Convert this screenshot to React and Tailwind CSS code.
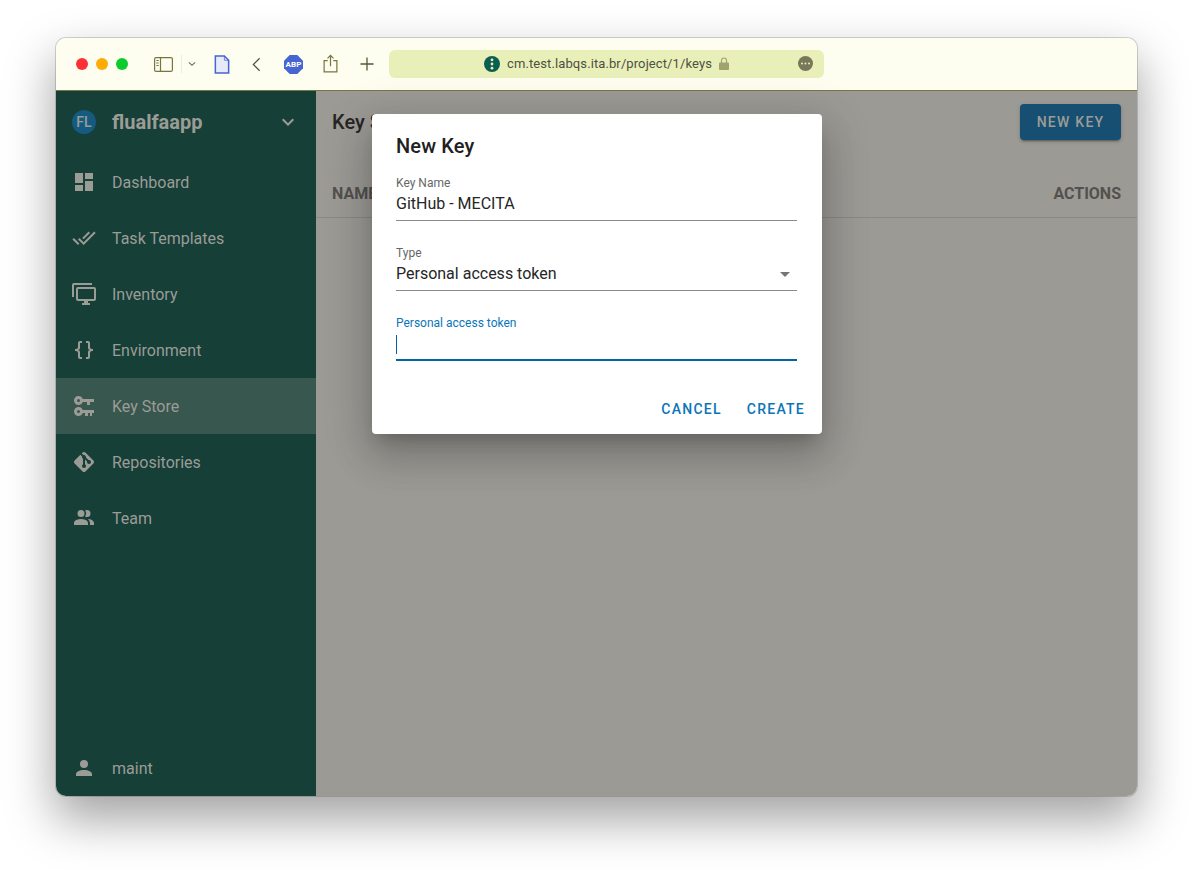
import React from "react";

const paths = {
  dashboard: "M13,3V9H21V3M13,21H21V11H13M3,21H11V15H3M3,13H11V3H3V13Z",
  tasks: "M0.41,13.41L6,19L7.41,17.58L1.83,12M22.24,5.58L11.66,16.17L7.5,12L6.07,13.41L11.66,19L23.66,7M18,7L16.59,5.58L10.24,11.93L11.66,13.34L18,7Z",
  inventory: "M22,17V7H6V17H22M22,5A2,2 0 0,1 24,7V17C24,18.11 23.1,19 22,19H16V21H18V23H10V21H12V19H6C4.89,19 4,18.11 4,17V7A2,2 0 0,1 6,5H22M2,3V15H0V3A2,2 0 0,1 2,1H20V3H2Z",
  braces: "M8,3A2,2 0 0,0 6,5V9A2,2 0 0,1 4,11H3V13H4A2,2 0 0,1 6,15V19A2,2 0 0,0 8,21H10V19H8V14A2,2 0 0,0 6,12A2,2 0 0,0 8,10V5H10V3M16,3A2,2 0 0,1 18,5V9A2,2 0 0,0 20,11H21V13H20A2,2 0 0,0 18,15V19A2,2 0 0,1 16,21H14V19H16V14A2,2 0 0,1 18,12A2,2 0 0,1 16,10V5H14V3H16Z",
  keys: "M6.5,2C8.46,2 10.13,3.25 10.74,5H22V8H18V11H15V8H10.74C10.13,9.75 8.46,11 6.5,11C4,11 2,9 2,6.5C2,4 4,2 6.5,2M6.5,5A1.5,1.5 0 0,0 5,6.5A1.5,1.5 0 0,0 6.5,8A1.5,1.5 0 0,0 8,6.5A1.5,1.5 0 0,0 6.5,5M6.5,13C8.46,13 10.13,14.25 10.74,16H22V19H20V22H18V19H16V22H13V19H10.74C10.13,20.75 8.46,22 6.5,22C4,22 2,20 2,17.5C2,15 4,13 6.5,13M6.5,16A1.5,1.5 0 0,0 5,17.5A1.5,1.5 0 0,0 6.5,19A1.5,1.5 0 0,0 8,17.5A1.5,1.5 0 0,0 6.5,16Z",
  git: "M2.6,10.59L8.38,4.8L10.07,6.5C9.83,7.35 10.22,8.28 11,8.73V14.27C10.4,14.61 10,15.26 10,16A2,2 0 0,0 12,18A2,2 0 0,0 14,16C14,15.26 13.6,14.61 13,14.27V9.41L15.07,11.5C15,11.65 15,11.82 15,12A2,2 0 0,0 17,14A2,2 0 0,0 19,12A2,2 0 0,0 17,10C16.82,10 16.65,10 16.5,10.07L13.93,7.5C14.19,6.57 13.71,5.55 12.78,5.16C12.35,5 11.9,4.96 11.5,5.07L9.8,3.38L10.59,2.6C11.37,1.81 12.63,1.81 13.41,2.6L21.4,10.59C22.19,11.37 22.19,12.63 21.4,13.41L13.41,21.4C12.63,22.19 11.37,22.19 10.59,21.4L2.6,13.41C1.81,12.63 1.81,11.37 2.6,10.59Z",
  team: "M16 17V19H2V17S2 13 9 13 16 17 16 17M12.5 7.5A3.5 3.5 0 1 0 9 11A3.5 3.5 0 0 0 12.5 7.5M15.94 13A5.32 5.32 0 0 1 18 17V19H22V17S22 13.37 15.94 13M15 4A3.39 3.39 0 0 0 13.07 4.59A5 5 0 0 1 13.07 10.41A3.39 3.39 0 0 0 15 11A3.5 3.5 0 0 0 15 4Z",
  account: "M12,4A4,4 0 0,1 16,8A4,4 0 0,1 12,12A4,4 0 0,1 8,8A4,4 0 0,1 12,4M12,14C16.42,14 20,15.79 20,18V20H4V18C4,15.79 7.58,14 12,14Z",
  chevron: "M7.41,8.58L12,13.17L16.59,8.58L18,10L12,16L6,10L7.41,8.58Z",
};

const navItems = [
  { label: "Dashboard", icon: "dashboard" },
  { label: "Task Templates", icon: "tasks" },
  { label: "Inventory", icon: "inventory" },
  { label: "Environment", icon: "braces" },
  { label: "Key Store", icon: "keys", active: true },
  { label: "Repositories", icon: "git" },
  { label: "Team", icon: "team" },
];

function Mdi({ name, className }) {
  return (
    <svg viewBox="0 0 24 24" className={className} fill="currentColor">
      <path d={paths[name]} />
    </svg>
  );
}

function NavRow({ label, icon, active }) {
  return (
    <div className={`flex h-14 items-center pl-4 ${active ? "bg-[#38574e]" : ""}`}>
      <Mdi name={icon} className="h-6 w-6 shrink-0 text-[#9c9c97]" />
      <span className="ml-4 mt-[2px] text-base text-[#9c9c97]">{label}</span>
    </div>
  );
}

function Toolbar() {
  return (
    <div className="flex h-[53px] shrink-0 items-center border-b border-[#77763f] bg-[#fdfeef]">
      <div className="ml-5 flex gap-2">
        <div className="h-3 w-3 rounded-full bg-[#fb3138]" />
        <div className="h-3 w-3 rounded-full bg-[#fdab07]" />
        <div className="h-3 w-3 rounded-full bg-[#0ccb2f]" />
      </div>
      {/* sidebar toggle */}
      <svg viewBox="0 0 19 15" className="ml-[26px] h-[15px] w-[19px]" fill="none" stroke="#77763f" strokeWidth="1.2">
        <rect x="0.6" y="0.6" width="17.8" height="13.8" rx="1.5" />
        <path d="M6.5 0.6V14.4" />
        <path d="M2.3 3.5H4.7M2.3 6H4.7M2.3 8.5H4.7" />
      </svg>
      <div className="ml-2 h-[18px] w-px bg-[#eceedd]" />
      <svg viewBox="0 0 10 6" className="ml-[6px] h-[6px] w-2" fill="none" stroke="#77763f" strokeWidth="1.3">
        <path d="M1 1L5 4.5L9 1" />
      </svg>
      {/* page icon */}
      <svg viewBox="0 0 16 20" className="ml-[18px] h-[19px] w-4" fill="#e6eafa" stroke="#4664d2" strokeWidth="1.6">
        <path d="M1 1H10.5L15 5.5V19H1Z" />
        <path d="M10.5 1V5.5H15" fill="none" strokeWidth="0.8" />
      </svg>
      <svg viewBox="0 0 10 16" className="ml-[22px] h-[15px] w-[9px]" fill="none" stroke="#55553a" strokeWidth="1.4">
        <path d="M8.5 1L1.5 8L8.5 15" />
      </svg>
      {/* adblock badge */}
      <svg viewBox="0 0 20 20" className="ml-[23px] h-[19px] w-[19px]">
        <polygon points="6,0 14,0 20,6 20,14 14,20 6,20 0,14 0,6" fill="#4664d2" />
        <text x="10" y="13" textAnchor="middle" fontSize="8.5" fontWeight="700" fill="#fff" fontFamily="Roboto, sans-serif">ABP</text>
      </svg>
      <svg viewBox="0 0 16 20" className="ml-5 mt-[-1px] h-[19px] w-[15px]" fill="none" stroke="#77763f" strokeWidth="1.3">
        <path d="M5 7H1.2V19H14.8V7H11" />
        <path d="M8 13V1.5M4.8 4.5L8 1.3L11.2 4.5" />
      </svg>
      <svg viewBox="0 0 14 14" className="ml-[22px] h-[14px] w-[14px]" fill="none" stroke="#55553a" strokeWidth="1.3">
        <path d="M7 0.5V13.5M0.5 7H13.5" />
      </svg>
      {/* address bar */}
      <div className="relative ml-[15px] flex h-7 w-[435px] items-center justify-center rounded-md bg-[#e9efb9]">
        <svg viewBox="0 0 16 16" className="h-4 w-4">
          <circle cx="8" cy="8" r="8" fill="#0a5f50" />
          <circle cx="8" cy="3.8" r="1.4" fill="#e9efb9" />
          <circle cx="8" cy="8" r="1.4" fill="#e9efb9" />
          <circle cx="8" cy="12.2" r="1.4" fill="#e9efb9" />
        </svg>
        <span className="ml-[7px] text-[13px] tracking-[0.1px] text-[#4e5140]">cm.test.labqs.ita.br/project/1/keys</span>
        <svg viewBox="0 0 10 13" className="ml-[7px] mt-[-1px] h-[13px] w-[10px]">
          <path d="M2.5 6V3.5a2.5 2.5 0 0 1 5 0V6" fill="none" stroke="#a0a26f" strokeWidth="1.2" />
          <rect y="5.5" width="10" height="7.5" rx="1" fill="#a0a26f" />
        </svg>
        <svg viewBox="0 0 15 15" className="absolute right-[11px] top-[6px] h-[15px] w-[15px]">
          <circle cx="7.5" cy="7.5" r="7.5" fill="#77775a" />
          <circle cx="4" cy="7.5" r="1" fill="#e9efb9" />
          <circle cx="7.5" cy="7.5" r="1" fill="#e9efb9" />
          <circle cx="11" cy="7.5" r="1" fill="#e9efb9" />
        </svg>
      </div>
    </div>
  );
}

function Sidebar() {
  return (
    <div className="flex w-[260px] shrink-0 flex-col bg-[#153f37]">
      <div className="flex h-[63px] items-center pb-[2px] pl-4 pr-4">
        <div className="flex h-6 w-6 items-center justify-center rounded-full bg-[#155b80] text-sm font-medium text-[#9c9c97]">FL</div>
        <span className="ml-4 text-xl font-bold text-[#9c9c97]">flualfaapp</span>
        <Mdi name="chevron" className="ml-auto h-6 w-6 text-[#9c9c97]" />
      </div>
      {navItems.map((item) => (
        <NavRow key={item.label} {...item} />
      ))}
      <div className="mt-auto">
        <NavRow label="maint" icon="account" />
      </div>
    </div>
  );
}

function Field({ label, children, focused, className }) {
  return (
    <div className={className}>
      <div className={`text-xs leading-[14px] ${focused ? "text-[#0a76b8]" : "text-[#666]"}`}>{label}</div>
      <div className={`mt-px flex h-[30px] items-start text-base leading-[26px] text-[#262626] ${focused ? "border-b-2 border-[#0565a3]" : "border-b border-[#8a8a8a]"}`}>
        {children}
      </div>
    </div>
  );
}

function Dialog() {
  return (
    <div className="absolute left-[316px] top-[76px] h-[320px] w-[450px] rounded-[4px] bg-white shadow-[0_11px_15px_-7px_rgba(0,0,0,0.2),0_24px_38px_3px_rgba(0,0,0,0.14),0_9px_46px_8px_rgba(0,0,0,0.12)]">
      <div className="pl-6 pt-[17px] text-xl font-medium leading-[30px] tracking-[0.15px] text-[#212121]">New Key</div>
      <div className="mt-[15px] px-6 pr-[25px]">
        <Field label="Key Name">GitHub - MECITA</Field>
        <Field label="Type" className="mt-[25px]">
          <span>Personal access token</span>
          <svg viewBox="0 0 10 5" className="ml-auto mr-[7px] mt-[11px] h-[5px] w-[10px]" fill="#757575">
            <path d="M0 0H10L5 5Z" />
          </svg>
        </Field>
        <Field label="Personal access token" focused className="mt-[25px]">
          <div className="mt-1 h-[19px] w-px bg-[#0565a3]" />
        </Field>
      </div>
      <div className="mt-10 flex justify-end gap-[25px] pr-[17px] text-sm font-medium leading-4 tracking-[1.25px] text-[#0a76b8]">
        <span>CANCEL</span>
        <span>CREATE</span>
      </div>
    </div>
  );
}

function Main() {
  return (
    <div className="flex flex-1 flex-col bg-[#9c9a95]">
      <div className="flex h-[63px] items-center justify-between pb-[2px] pl-4 pr-4">
        <span className="text-xl font-medium text-[#262624]">Key Store</span>
        <div className="flex h-9 w-[101px] items-center justify-center rounded-[4px] bg-[#164f72] text-sm font-medium tracking-[1.25px] text-[#9c9c97] shadow-[0_3px_1px_-2px_rgba(0,0,0,0.2),0_2px_2px_0_rgba(0,0,0,0.14),0_1px_5px_0_rgba(0,0,0,0.12)]">
          NEW KEY
        </div>
      </div>
      <div className="flex h-[64px] items-center justify-between border-b border-[#8a8985] pl-4 pr-4 pt-[16px] text-base font-bold text-[#52514e]">
        <span>NAME</span>
        <span>ACTIONS</span>
      </div>
    </div>
  );
}

export default function App() {
  return (
    <div className="h-[870px] w-[1193px] bg-white pl-[56px] pt-[38px] font-['Roboto',sans-serif]">
      <div className="relative h-[758px] w-[1081px] rounded-[10px] shadow-[0_0_0_1px_rgba(0,0,0,0.16),0_22px_48px_2px_rgba(0,0,0,0.36)]">
        <div className="flex h-full flex-col overflow-hidden rounded-[10px]">
          <Toolbar />
          <div className="flex min-h-0 flex-1">
            <Sidebar />
            <Main />
          </div>
        </div>
        <Dialog />
      </div>
    </div>
  );
}
